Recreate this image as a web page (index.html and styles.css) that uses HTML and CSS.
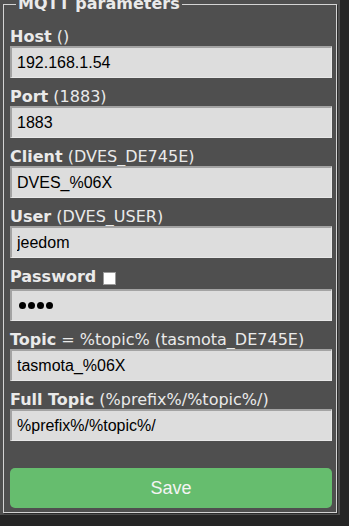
FILE: index.html
```html
<!DOCTYPE html>
<html>
<head>
<meta charset="utf-8">
<link rel="stylesheet" href="styles.css">
</head>
<body>
<div class="page">
  <fieldset class="box">
    <legend class="legend">MQTT parameters</legend>
    <div class="fields">
      <div class="field">
        <div class="label"><b>Host</b>&nbsp;()</div>
        <input class="inp" type="text" value="192.168.1.54">
      </div>
      <div class="field">
        <div class="label"><b>Port</b>&nbsp;(1883)</div>
        <input class="inp" type="text" value="1883">
      </div>
      <div class="field">
        <div class="label"><b>Client</b>&nbsp;(DVES_DE745E)</div>
        <input class="inp" type="text" value="DVES_%06X">
      </div>
      <div class="field">
        <div class="label"><b>User</b>&nbsp;(DVES_USER)</div>
        <input class="inp" type="text" value="jeedom">
      </div>
      <div class="field">
        <div class="label label-pw"><b>Password</b><span class="check"></span></div>
        <div class="inp pw"><span class="dot"></span><span class="dot"></span><span class="dot"></span><span class="dot"></span></div>
      </div>
      <div class="field">
        <div class="label"><b>Topic</b>&nbsp;= %topic% (tasmota_DE745E)</div>
        <input class="inp" type="text" value="tasmota_%06X">
      </div>
      <div class="field">
        <div class="label"><b>Full Topic</b>&nbsp;(%prefix%/%topic%/)</div>
        <input class="inp" type="text" value="%prefix%/%topic%/">
      </div>
    </div>
    <button class="save">Save</button>
  </fieldset>
</div>
</body>
</html>
```
FILE: styles.css
```css
html, body {
  margin: 0;
  padding: 0;
  background: #252525;
  overflow: hidden;
}
.page {
  width: 337px;
  height: 515px;
  padding-left: 3px;
  background: #4f4f4f;
  overflow: hidden;
  font-family: "DejaVu Sans", Verdana, sans-serif;
  color: #eaeaea;
}
.box {
  margin: -6px 0 0 0;
  width: 322px;
  padding: 13px 4px 4px 6px;
  border: 1px solid #d4d4d4;
  box-shadow: 1px 1px 0 #2c2c2c;
  background: #4f4f4f;
  min-width: 0;
}
.legend {
  margin-left: 6px;
  padding: 0 2px;
  font-weight: bold;
  font-size: 16px;
  line-height: 20px;
  color: #eaeaea;
}
.fields {
  display: flex;
  flex-direction: column;
  gap: 9px;
}
.field {
  display: flex;
  flex-direction: column;
}
.label {
  height: 19px;
  line-height: 19px;
  font-size: 16px;
  white-space: nowrap;
}
.label b {
  font-weight: bold;
}
.label-pw {
  height: 22px;
  display: flex;
  align-items: flex-start;
}
.check {
  display: inline-block;
  width: 11px;
  height: 11px;
  margin: 5px 0 0 7px;
  background: #ffffff;
  border: 1px solid #9a9a9a;
}
.inp {
  box-sizing: border-box;
  width: 322px;
  height: 32px;
  margin: 0;
  padding: 0 5px;
  border-style: solid;
  border-width: 2px 1px 1px 2px;
  border-color: #a3a3a3 #e8e8e8 #e8e8e8 #a3a3a3;
  background: #dddddd;
  color: #000000;
  font-family: "Liberation Sans", Arial, sans-serif;
  font-size: 16px;
  outline: none;
}
.pw {
  display: flex;
  align-items: center;
  gap: 2px;
  padding-left: 7px;
}
.dot {
  width: 7px;
  height: 7px;
  border-radius: 50%;
  background: #000;
}
.save {
  display: block;
  margin-top: 27px;
  width: 322px;
  height: 40px;
  border: 0;
  border-radius: 5px;
  background: #66bd6e;
  color: #f4f4f4;
  font-family: "Liberation Sans", Arial, sans-serif;
  font-size: 18px;
  padding: 0;
}
```
